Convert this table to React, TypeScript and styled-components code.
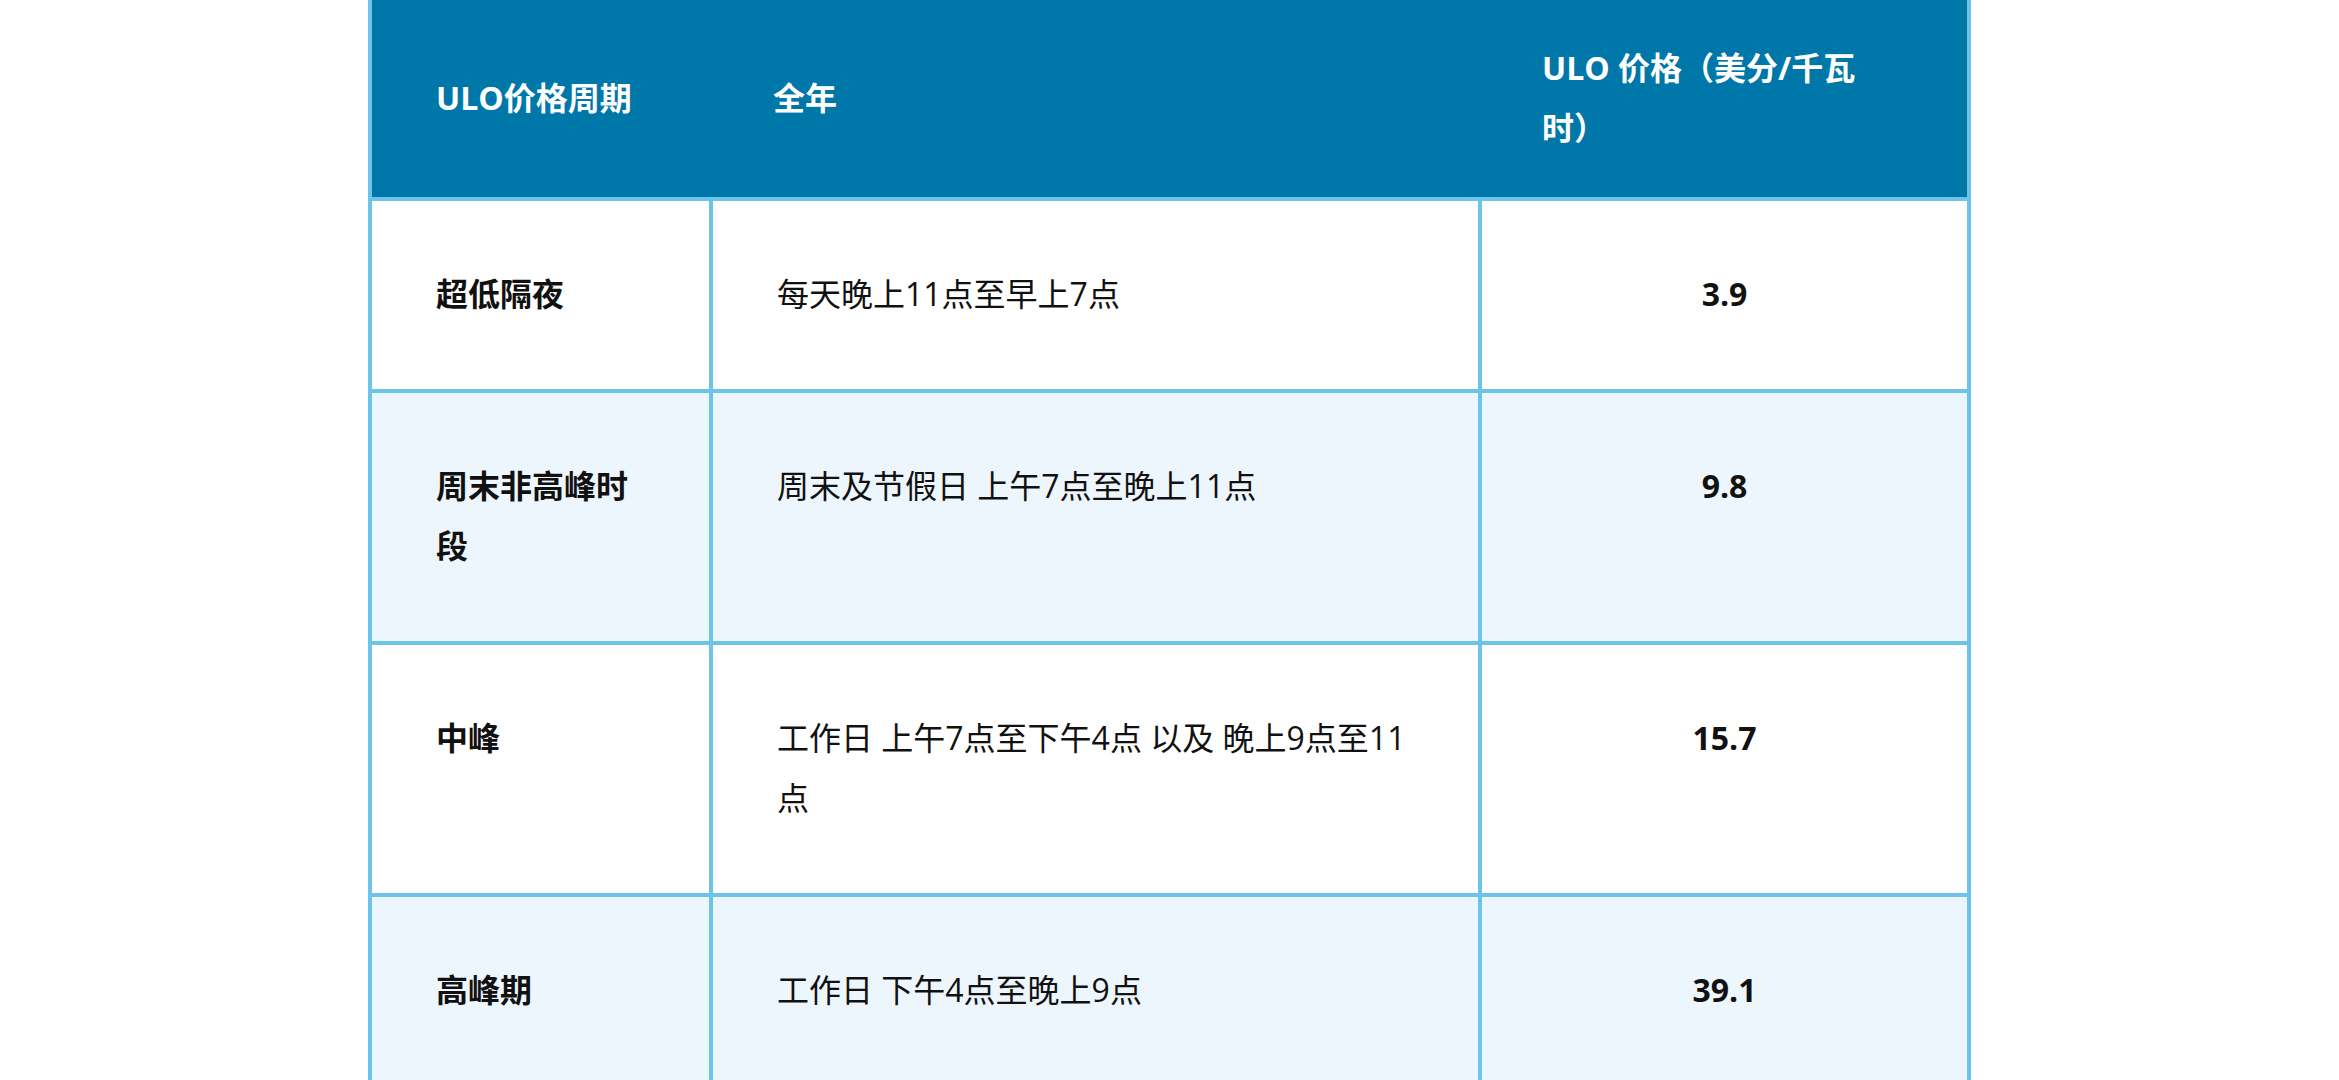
import React from "react";
import styled, { createGlobalStyle } from "styled-components";

const GlobalStyle = createGlobalStyle`
  html, body {
    margin: 0;
    padding: 0;
    background: #ffffff;
  }
  body {
    font-family: "Open Sans", "Noto Sans CJK SC", "Noto Sans", sans-serif;
    color: #111111;
  }
`;

const LINE = "#6cc4ea";

const Page = styled.div`
  width: 100%;
  min-height: 1080px;
  display: flex;
  justify-content: center;
  align-items: flex-start;
`;

const Table = styled.table`
  width: 1603px;
  table-layout: fixed;
  border-collapse: separate;
  border-spacing: 0;
  border-left: 4px solid ${LINE};
  border-right: 4px solid ${LINE};
  font-size: 32px;
  line-height: 60px;
`;

const HeadCell = styled.th<{ $w: number }>`
  width: ${(p) => p.$w}px;
  box-sizing: border-box;
  background: #0077a9;
  color: #ffffff;
  font-weight: 700;
  text-align: left;
  vertical-align: middle;
  padding: 38px 64px 39px 64px;
  border-bottom: 4px solid ${LINE};
`;

const Row = styled.tr<{ $alt: boolean }>`
  background: ${(p) => (p.$alt ? "#eef6fd" : "#ffffff")};
`;

const Cell = styled.td<{ $bold?: boolean; $center?: boolean; $first?: boolean }>`
  box-sizing: border-box;
  vertical-align: top;
  padding: 63px 64px 65px 64px;
  font-weight: ${(p) => (p.$bold ? 700 : 400)};
  text-align: ${(p) => (p.$center ? "center" : "left")};
  border-left: ${(p) => (p.$first ? "none" : `4px solid ${LINE}`)};
  tr + tr > & {
    border-top: 4px solid ${LINE};
  }
`;

const rows = [
  { period: "超低隔夜", time: "每天晚上11点至早上7点", price: "3.9" },
  { period: "周末非高峰时段", time: "周末及节假日 上午7点至晚上11点", price: "9.8" },
  { period: "中峰", time: "工作日 上午7点至下午4点 以及 晚上9点至11点", price: "15.7" },
  { period: "高峰期", time: "工作日 下午4点至晚上9点", price: "39.1" },
];

export default function App() {
  return (
    <>
      <GlobalStyle />
      <Page>
        <Table>
          <thead>
            <tr>
              <HeadCell $w={337}>ULO价格周期</HeadCell>
              <HeadCell $w={769}>全年</HeadCell>
              <HeadCell $w={489}>ULO 价格（美分/千瓦时）</HeadCell>
            </tr>
          </thead>
          <tbody>
            {rows.map((r, i) => (
              <Row key={r.period} $alt={i % 2 === 1}>
                <Cell $bold $first>
                  {r.period}
                </Cell>
                <Cell>{r.time}</Cell>
                <Cell $bold $center>
                  {r.price}
                </Cell>
              </Row>
            ))}
          </tbody>
        </Table>
      </Page>
    </>
  );
}
